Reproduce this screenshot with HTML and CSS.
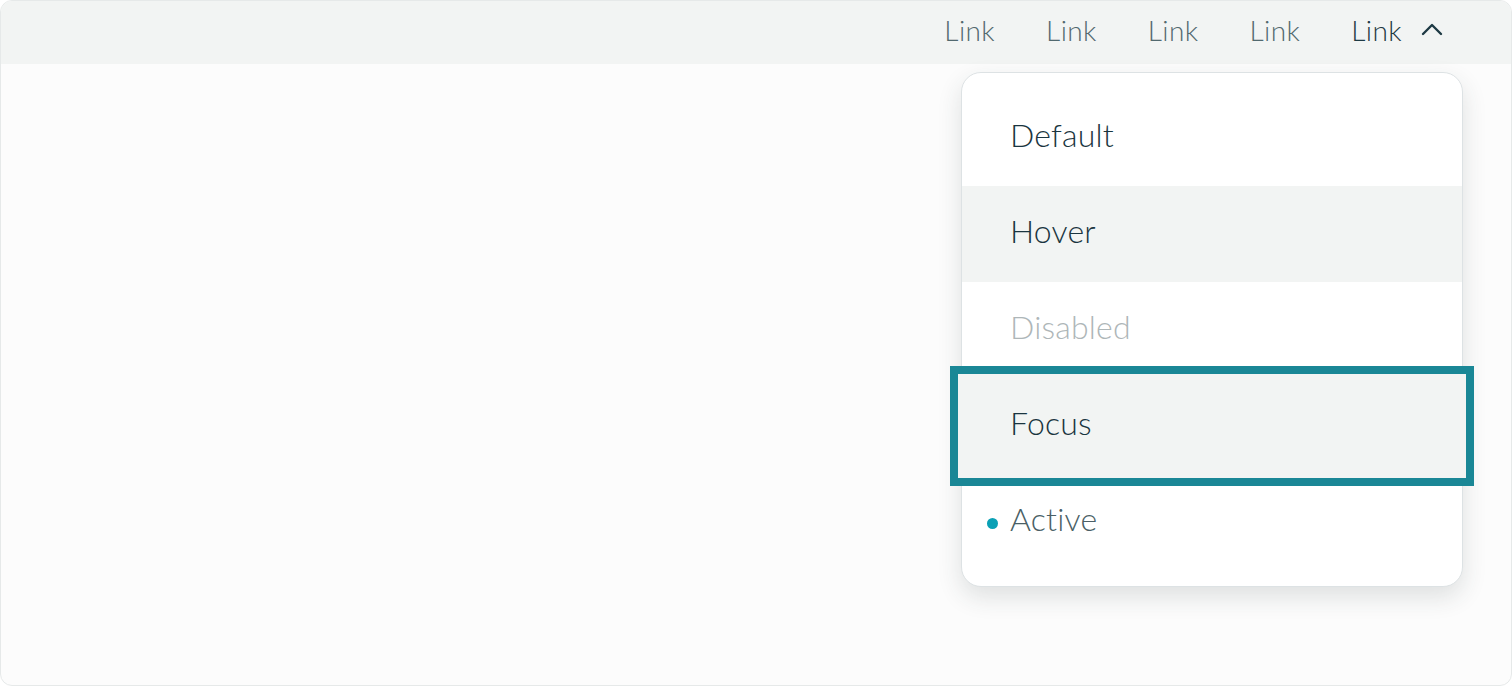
FILE: index.html
```html
<!DOCTYPE html>
<html>
<head>
<meta charset="utf-8">
<link rel="stylesheet" href="styles.css">
</head>
<body>
<div class="frame">
  <nav class="topbar">
    <a class="nav-link">Link</a>
    <a class="nav-link">Link</a>
    <a class="nav-link">Link</a>
    <a class="nav-link">Link</a>
    <a class="nav-link open">Link
      <svg class="chev" width="22" height="14" viewBox="0 0 22 14"><path d="M2 12 L11 3 L20 12" fill="none" stroke="currentColor" stroke-width="2.4" stroke-linecap="round" stroke-linejoin="round"/></svg>
    </a>
  </nav>
  <ul class="menu">
    <li class="item">Default</li>
    <li class="item hover">Hover</li>
    <li class="item disabled">Disabled</li>
    <li class="item focus">Focus</li>
    <li class="item active"><span class="dot"></span>Active</li>
  </ul>
</div>
</body>
</html>
```
FILE: styles.css
```css
html, body {
  margin: 0;
  padding: 0;
  background: #ffffff;
}
.frame {
  position: relative;
  box-sizing: border-box;
  width: 1512px;
  height: 686px;
  border: 1px solid #e6e9e9;
  border-radius: 12px;
  background: #fcfcfc;
  overflow: hidden;
  font-family: Lato, "Open Sans", sans-serif;
}
.topbar {
  height: 63px;
  background: #f2f4f3;
  display: flex;
  justify-content: flex-end;
  align-items: center;
  gap: 51px;
  padding-right: 68px;
}
.nav-link {
  font-size: 28px;
  font-weight: 300;
  letter-spacing: 0.4px;
  color: #52696f;
  display: flex;
  align-items: center;
  gap: 19px;
  line-height: 1;
  padding-bottom: 6px;
}
.nav-link.open {
  color: #1e3a44;
}
.chev {
  display: block;
  margin-top: -2px;
}
.menu {
  position: absolute;
  top: 71px;
  right: 48px;
  width: 502px;
  box-sizing: border-box;
  margin: 0;
  padding: 17px 0 16px;
  list-style: none;
  background: #ffffff;
  border: 1px solid #dde2e4;
  border-radius: 20px;
  box-shadow: 0 10px 24px rgba(40, 55, 60, 0.14);
}
.item {
  height: 96px;
  display: flex;
  align-items: center;
  padding: 0 0 7px 48px;
  box-sizing: border-box;
  font-size: 32px;
  font-weight: 300;
  letter-spacing: 0.2px;
  color: #1a3540;
  position: relative;
}
.item.hover {
  background: #f2f4f3;
}
.item.disabled {
  color: #aeb6b8;
}
.item.focus {
  background: #f2f4f3;
  outline: 8px solid #1a8796;
  outline-offset: 4px;
  box-shadow: 0 0 0 4px #f2f4f3;
}
.item.active {
  color: #4a5f66;
}
.dot {
  position: absolute;
  left: 25px;
  top: 44px;
  width: 11px;
  height: 11px;
  border-radius: 50%;
  background: #0aa0b5;
}
```
